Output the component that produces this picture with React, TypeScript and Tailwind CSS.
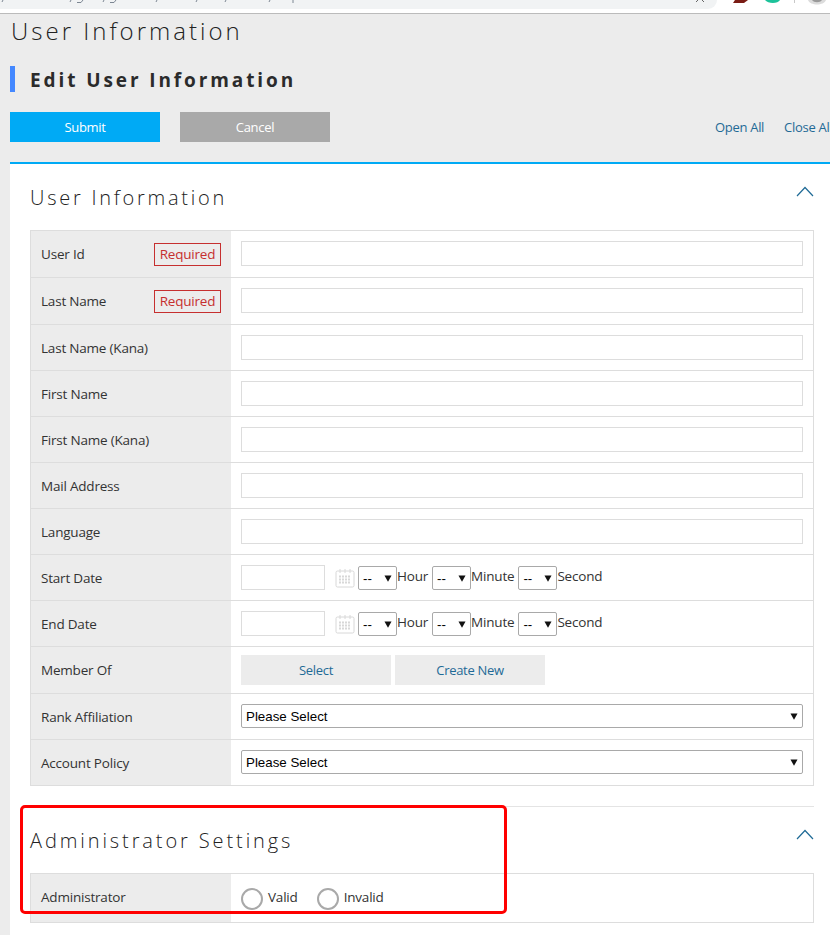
import React from "react";

function Chevron({ className }: { className: string }) {
  return (
    <svg width="18" height="11" viewBox="0 0 18 11" fill="none" className={className}>
      <path d="M1 10 L9 1.5 L17 10" stroke="#1f6a96" strokeWidth="1.2" />
    </svg>
  );
}

function Calendar() {
  return (
    <svg width="20" height="20" viewBox="0 0 20 20" fill="none" className="shrink-0">
      <rect x="1" y="3" width="18" height="16" rx="1.5" fill="#fff" stroke="#d8d8d8" />
      <path d="M5 1v4M10 1v4M15 1v4" stroke="#d8d8d8" />
      <path d="M4 8.5h12M4 11.5h12M4 14.5h12" stroke="#d8d8d8" strokeWidth="2" strokeDasharray="2 1" />
    </svg>
  );
}

function Arrow({ className }: { className: string }) {
  return (
    <svg width="8" height="7" viewBox="0 0 8 7" className={`pointer-events-none absolute ${className}`}>
      <path d="M0.5 0.5 H7.5 L4 6.8 Z" fill="#111111" />
    </svg>
  );
}

function Required() {
  return (
    <span className="flex h-[23px] w-[67px] items-center justify-center border border-[#c62f2f] text-[#c62f2f]">
      Required
    </span>
  );
}

function Row({
  label,
  required,
  h,
  cell = "pt-[10px]",
  labelCell = "pt-[1px]",
  children,
}: {
  label: string;
  required?: boolean;
  h: string;
  cell?: string;
  labelCell?: string;
  children: React.ReactNode;
}) {
  return (
    <div className={`flex border-b border-[#dddddd] last:border-b-0 ${h}`}>
      <div className={`flex w-[200px] shrink-0 items-center justify-between bg-[#ececec] px-[10px] ${labelCell}`}>
        <span>{label}</span>
        {required && <Required />}
      </div>
      <div className={`flex flex-1 items-start px-[10px] ${cell}`}>{children}</div>
    </div>
  );
}

function TextBox() {
  return <input type="text" className="h-[25px] w-full border border-[#dddddd] bg-white" />;
}

function MiniSelect() {
  return (
    <span className="relative block h-[24px] w-[39px]">
      <select className="h-[24px] w-[39px] appearance-none rounded-[2px] border border-[#a9a9a9] bg-white pl-[4px] pt-[2px] font-['Liberation_Sans',sans-serif] text-[13.33px] tracking-normal text-black">
        <option>--</option>
      </select>
      <Arrow className="right-[5px] top-[9px]" />
    </span>
  );
}

function DateRow() {
  return (
    <div className="flex items-center">
      <input type="text" className="h-[25px] w-[84px] border border-[#dddddd] bg-white" />
      <span className="ml-[10px] mr-[3px] flex items-center">
        <Calendar />
      </span>
      <MiniSelect />
      <span className="mr-[4px] -mt-[3px]">Hour</span>
      <MiniSelect />
      <span className="mr-[4px] -mt-[3px]">Minute</span>
      <MiniSelect />
      <span className="-mt-[3px]">Second</span>
    </div>
  );
}

function WideSelect() {
  return (
    <span className="relative block h-[24px] w-full">
      <select className="h-[24px] w-full appearance-none rounded-[2px] border border-[#a9a9a9] bg-white pl-[4px] pt-[2px] font-['Liberation_Sans',sans-serif] text-[13.33px] tracking-normal text-black">
        <option>Please Select</option>
      </select>
      <Arrow className="right-[5px] top-[9px]" />
    </span>
  );
}

function Radio({ label }: { label: string }) {
  return (
    <label className="flex items-center gap-[5px]">
      <input
        type="radio"
        className="mt-[2px] h-[22px] w-[22px] appearance-none rounded-full border-[2px] border-[#a9a9a9] bg-white"
      />
      <span className="-mt-[1px]">{label}</span>
    </label>
  );
}

export default function App() {
  return (
    <div className="relative h-[935px] w-[830px] overflow-hidden bg-[#ececec] font-['Open_Sans',sans-serif] text-[13.5px] tracking-[-0.2px] text-[#333333]">
      {/* browser chrome remnant */}
      <div className="relative h-[14px] border-b border-[#bbbbbb] bg-white">
        <div className="h-[9px] w-[717px] rounded-br-[12px] bg-[#f1f3f4]" />
        <svg width="830" height="13" viewBox="0 0 830 13" fill="none" className="absolute left-0 top-0">
          <path
            d="M2 2 L3 0 M70 2 L71 0 M77 2.5 H81 L83 0 M103 2 L104 0 M110 2.5 H114 L116 0 M156 2 L157 0 M196 2 L197 0 M225 2 L226 0 M269 2 L270 0 M293 3 V0"
            stroke="#7d8793"
          />
          <path d="M696 2 L698 0 M704 2 L702 0" stroke="#666666" />
          <path d="M733 3 H744 L748 0 H735 Z" fill="#7a1c14" />
          <path d="M765 0 H780 C778 4 768 4 765 0 Z" fill="#1cc29a" />
          <path d="M794.5 0 V3" stroke="#c8c8c8" />
          <path d="M808 0 H826 C824 6 810 6 808 0 Z" fill="#dcdcdc" />
          <path d="M812 0 H822 C820 3 814 3 812 0 Z" fill="#9a9a9a" />
        </svg>
      </div>

      <h1 className="ml-[11px] mt-[2px] h-[36px] text-[24px] font-light leading-[30px] tracking-[3px] text-[#222222]">
        User Information
      </h1>

      <div className="ml-[10px] mt-[14px] flex h-[26px] items-center border-l-[5px] border-[#4488ff] pl-[15px]">
        <h2 className="pt-[3px] text-[19px] font-bold tracking-[2.9px] text-[#2b2b2b]">Edit User Information</h2>
      </div>

      <div className="mt-[20px] flex h-[30px] items-center justify-between pl-[10px] text-[13px] tracking-[-0.3px]">
        <div className="flex gap-[20px]">
          <button className="h-[30px] w-[150px] bg-[#00aaf5] pt-[2px] text-white">Submit</button>
          <button className="h-[30px] w-[150px] bg-[#a9a9a9] pt-[2px] text-white">Cancel</button>
        </div>
        <div className="flex w-[115px] shrink-0 gap-[20px] whitespace-nowrap pt-[2px] text-[#1f6a96]">
          <span>Open All</span>
          <span>Close All</span>
        </div>
      </div>

      <div className="ml-[10px] mt-[20px] w-[824px] border-t-[2px] border-[#00aaf5] bg-white px-[20px] pb-[20px]">
        <section className="relative">
          <h3 className="flex h-[66px] items-center pt-[2px] text-[20px] font-light tracking-[2.75px] text-[#222222]">
            User Information
          </h3>
          <Chevron className="absolute right-[0px] top-[22px]" />
          <div className="border border-[#dddddd]">
            <Row label="User Id" required h="h-[47px]" labelCell=""><TextBox /></Row>
            <Row label="Last Name" required h="h-[47px]" labelCell=""><TextBox /></Row>
            <Row label="Last Name (Kana)" h="h-[46px]"><TextBox /></Row>
            <Row label="First Name" h="h-[46px]"><TextBox /></Row>
            <Row label="First Name (Kana)" h="h-[46px]"><TextBox /></Row>
            <Row label="Mail Address" h="h-[46px]"><TextBox /></Row>
            <Row label="Language" h="h-[46px]"><TextBox /></Row>
            <Row label="Start Date" h="h-[46px]"><DateRow /></Row>
            <Row label="End Date" h="h-[46px]"><DateRow /></Row>
            <Row label="Member Of" h="h-[47px]" cell="pt-[8px]" labelCell="">
              <div className="flex gap-[4px] text-[13px] tracking-[-0.3px] text-[#1f6a96]">
                <button className="h-[30px] w-[150px] bg-[#ececec] pt-[2px]">Select</button>
                <button className="h-[30px] w-[150px] bg-[#ececec] pt-[2px]">Create New</button>
              </div>
            </Row>
            <Row label="Rank Affiliation" h="h-[46px]"><WideSelect /></Row>
            <Row label="Account Policy" h="h-[45px]"><WideSelect /></Row>
          </div>
        </section>

        <section className="relative mt-[20px] border-t border-[#e4e4e4]">
          <h3 className="flex h-[66px] items-center pt-[2px] text-[20px] font-light tracking-[2.9px] text-[#222222]">
            Administrator Settings
          </h3>
          <Chevron className="absolute right-[0px] top-[22px]" />
          <div className="border border-[#dddddd]">
            <Row label="Administrator" h="h-[48px]" cell="pt-[12px]" labelCell="pb-[2px]">
              <div className="flex gap-[19px]">
                <Radio label="Valid" />
                <Radio label="Invalid" />
              </div>
            </Row>
          </div>
        </section>
      </div>

      {/* red annotation */}
      <div className="pointer-events-none absolute left-[20px] top-[805px] h-[109px] w-[487px] rounded-[5px] border-[3px] border-[#ff0000]" />
    </div>
  );
}
